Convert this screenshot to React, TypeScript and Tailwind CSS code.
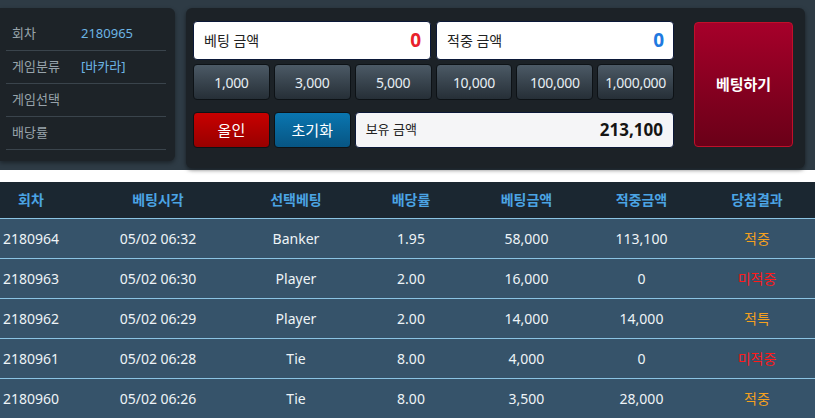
import React from "react";

const font = { fontFamily: '"Noto Sans", "Noto Sans CJK KR", sans-serif' };

const chips = ["1,000", "3,000", "5,000", "10,000", "100,000", "1,000,000"];

const rows = [
  ["2180964", "05/02 06:32", "Banker", "1.95", "58,000", "113,100", "적중", "o"],
  ["2180963", "05/02 06:30", "Player", "2.00", "16,000", "0", "미적중", "r"],
  ["2180962", "05/02 06:29", "Player", "2.00", "14,000", "14,000", "적특", "o"],
  ["2180961", "05/02 06:28", "Tie", "8.00", "4,000", "0", "미적중", "r"],
  ["2180960", "05/02 06:26", "Tie", "8.00", "3,500", "28,000", "적중", "o"],
];

const heads = ["회차", "베팅시각", "선택베팅", "배당률", "베팅금액", "적중금액", "당첨결과"];

export default function App() {
  return (
    <div className="w-[815px] bg-white" style={font}>
      {/* top */}
      <div className="h-[170px] bg-[#2e3b45] flex items-start pt-[8px]">
        {/* left info panel */}
        <div className="w-[175px] h-[153px] bg-[#1d2328] rounded-r-md shadow-[0_2px_4px_rgba(0,0,0,0.4)] pt-[10px] pl-[6px] pr-[9px]">
          {[
            ["회차", "2180965"],
            ["게임분류", "[바카라]"],
            ["게임선택", ""],
            ["배당률", ""],
          ].map(([l, v]) => (
            <div key={l} className="h-[33px] border-b border-[#3a444c] flex items-center pl-[6px] text-[13px]">
              <span className="w-[69px] text-[#98a3ab]">{l}</span>
              <span className="text-[#6cb4e4]">{v}</span>
            </div>
          ))}
        </div>
        {/* right panel */}
        <div className="ml-[11px] w-[619px] bg-[#1c2227] rounded-md shadow-[0_2px_4px_rgba(0,0,0,0.5)] flex items-center pl-[7px] pr-[12px] pt-[13px] pb-[20px]">
          <div className="w-[481px] flex flex-col">
            <div className="flex gap-[5px] h-[39px]">
              <div className="flex-1 bg-white border border-[#0b1838] rounded-[4px] flex items-center justify-between pl-[10px] pr-[9px]">
                <span className="text-[14px] text-[#222]">베팅 금액</span>
                <span className="text-[19px] font-bold text-[#e8212b]">0</span>
              </div>
              <div className="flex-1 bg-white border border-[#0b1838] rounded-[4px] flex items-center justify-between pl-[10px] pr-[9px]">
                <span className="text-[14px] text-[#222]">적중 금액</span>
                <span className="text-[19px] font-bold text-[#1f7ae0]">0</span>
              </div>
            </div>
            <div className="grid grid-cols-6 gap-[4px] mt-[4px] h-[36px]">
              {chips.map((c) => (
                <div
                  key={c}
                  className="rounded-[4px] border border-[#0d1216] bg-gradient-to-b from-[#4c5a66] to-[#262f37] flex items-center justify-center text-[14px] text-[#e6edf3] tracking-[-0.3px]"
                >
                  {c}
                </div>
              ))}
            </div>
            <div className="grid grid-cols-6 gap-[4px] mt-[12px] h-[36px]">
              <div className="rounded-[4px] border border-[#0d1216] bg-gradient-to-b from-[#c80000] to-[#980000] flex items-center justify-center text-[15px] text-white">
                올인
              </div>
              <div className="rounded-[4px] border border-[#0d1216] bg-gradient-to-b from-[#0a76b0] to-[#075583] flex items-center justify-center text-[15px] text-white">
                초기화
              </div>
              <div className="col-span-4 bg-[#f5f5f7] border border-[#0b1838] rounded-[4px] flex items-center justify-between pl-[10px] pr-[10px]">
                <span className="text-[13px] text-[#222]">보유 금액</span>
                <span className="text-[17px] font-bold text-[#151515]">213,100</span>
              </div>
            </div>
          </div>
          <div className="ml-[20px] w-[99px] h-[125px] rounded-[4px] border border-[#c0102a] bg-gradient-to-b from-[#a6002a] to-[#6a0018] flex items-center justify-center text-[15px] font-bold text-white">
            베팅하기
          </div>
        </div>
      </div>
      <div className="h-[12px] bg-white" />
      {/* table */}
      <table className="w-[815px] table-fixed border-collapse">
        <colgroup>
          <col className="w-[77px]" />
          <col className="w-[162px]" />
          <col className="w-[114px]" />
          <col className="w-[116px]" />
          <col className="w-[115px]" />
          <col className="w-[115px]" />
          <col className="w-[116px]" />
        </colgroup>
        <thead>
          <tr className="h-[36px] bg-[#1b2731]">
            {heads.map((h, i) => (
              <th
                key={h}
                className={`text-[14px] font-bold text-[#4ba4e4] text-center ${i === 0 ? "pr-[15px]" : ""}`}
              >
                {h}
              </th>
            ))}
          </tr>
        </thead>
        <tbody>
          {rows.map((r) => (
            <tr key={r[0]} className="h-[40px] bg-[#36536a] border-t border-[#8bc3e3]">
              {r.slice(0, 7).map((c, i) => (
                <td
                  key={i}
                  className={`text-center text-[14px] ${
                    i === 6 ? (r[7] === "o" ? "text-[#f5a020]" : "text-[#ff1a1a]") : "text-[#eef3f7]"
                  } ${i === 0 ? "pr-[15px]" : ""}`}
                >
                  {c}
                </td>
              ))}
            </tr>
          ))}
        </tbody>
      </table>
    </div>
  );
}
